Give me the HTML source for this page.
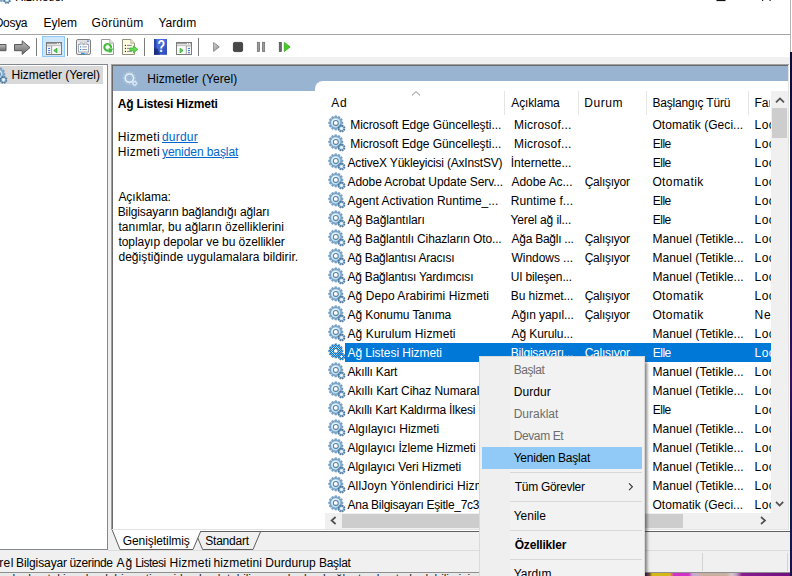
<!DOCTYPE html><html lang="tr"><head><meta charset="utf-8"><title>Hizmetler</title><style>
html,body{margin:0;padding:0}
body{width:792px;height:576px;overflow:hidden;background:#fff;position:relative;font:12px/15px "Liberation Sans",Arial,sans-serif;color:#000}
.t{position:absolute;white-space:pre;line-height:15px;height:15px;font-size:12px}
.b{position:absolute}
#shapes{position:absolute;left:0;top:0}
#menu{position:absolute;left:479px;top:356px;width:164px;height:240px;background:#f2f2f2;border:1px solid #dadada;box-shadow:3px 5px 3px -1px rgba(0,0,0,.5);box-sizing:content-box}
#menu .t{}
</style></head><body>
<div class="b" style="left:0px;top:57px;width:790px;height:515px;background:#f0f0f0;"></div>
<div class="b" style="left:0px;top:34px;width:790px;height:1px;background:#a5a5a5;"></div>
<div class="b" style="left:790px;top:0px;width:1px;height:52px;background:#b4b4b4;"></div>
<div class="b" style="left:790px;top:52px;width:2px;height:524px;background:linear-gradient(#0d0b36 0%,#10104a 30%,#2a0f58 55%,#3a0f5c 62%,#14124e 75%,#0d1a4a 88%,#1a1050 100%);"></div>
<div class="b" style="left:0px;top:573px;width:645px;height:3px;background:#e9e9e9;"></div>
<div class="b" style="left:645px;top:573px;width:145px;height:3px;background:linear-gradient(90deg,#5a2a6a 0%,#6a4a3a 3%,#d4b81a 5%,#d4b81a 17%,#d030c8 20%,#d030c8 30%,#c8a8d8 33%,#c8b0a0 40%,#c8b0a0 56%,#d8c8d0 60%,#c0a0c0 63%,#8a1a90 67%,#701080 100%);"></div>
<span class="t" style="left:2.00px;top:571.80px;letter-spacing:-0.137px;color:#222;">adımları takip ederek hizmeti yeniden başlatabilir ve ardından bağlantıyı kontrol edebilirsiniz.</span>
<div class="b" style="left:0px;top:572px;width:790px;height:1px;background:#8f8f8f;"></div>
<div class="b" style="left:0px;top:64px;width:107px;height:485px;background:#fff;border-top:1px solid #828790;border-right:1px solid #828790;border-bottom:1px solid #828790;height:484px"></div>
<div class="b" style="left:0px;top:66.3px;width:103px;height:17.4px;background:#d9d9d9;"></div>
<div class="b" style="left:111px;top:64px;width:679px;height:467px;background:#fff;"></div>
<div class="b" style="left:111px;top:64px;width:678px;height:1px;background:#a0a0a0;"></div>
<div class="b" style="left:111px;top:64px;width:1px;height:466px;background:#a0a0a0;"></div>
<div class="b" style="left:112px;top:65px;width:676px;height:1px;background:#696969;"></div>
<div class="b" style="left:112px;top:65px;width:1px;height:464px;background:#696969;"></div>
<div class="b" style="left:112px;top:529px;width:677px;height:1px;background:#e3e3e3;"></div>
<div class="b" style="left:788px;top:65px;width:1px;height:465px;background:#e3e3e3;"></div>
<div class="b" style="left:113px;top:66px;width:675px;height:24.6px;background:#99b4d1;"></div>
<div class="b" style="left:315px;top:81px;width:473px;height:10px;background:#fff;border-top-left-radius:8px"></div>
<div class="b" style="left:201px;top:531px;width:589px;height:1.3px;background:#5f5f5f;"></div>
<div class="b" style="left:504px;top:91px;width:1px;height:24px;background:#e5e5e5;"></div>
<div class="b" style="left:578px;top:91px;width:1px;height:24px;background:#e5e5e5;"></div>
<div class="b" style="left:646px;top:91px;width:1px;height:24px;background:#e5e5e5;"></div>
<div class="b" style="left:748px;top:91px;width:1px;height:24px;background:#e5e5e5;"></div>
<div class="b" style="left:345px;top:343px;width:426px;height:19px;background:#0078d7;"></div>
<div class="b" style="left:771.4px;top:91px;width:17.1px;height:438.3px;background:#f0f0f0;"></div>
<div class="b" style="left:325px;top:513px;width:447px;height:16.3px;background:#f0f0f0;"></div>
<div class="b" style="left:772.4px;top:108.3px;width:14.8px;height:29.4px;background:#cdcdcd;"></div>
<div class="b" style="left:342px;top:513.6px;width:340.8px;height:14.6px;background:#cdcdcd;"></div>
<div class="b" style="left:108px;top:550px;width:682px;height:1px;background:#dcdcdc;"></div>
<div class="b" style="left:702px;top:553px;width:1px;height:18px;background:#d2d2d2;"></div>
<div class="b" style="left:787px;top:553px;width:1px;height:18px;background:#d2d2d2;"></div>
<svg id="shapes" width="792" height="576" viewBox="0 0 792 576"><defs>
<linearGradient id="gArrow" x1="0" y1="0" x2="0" y2="1"><stop offset="0" stop-color="#bdbdbd"/><stop offset="1" stop-color="#6c6c6c"/></linearGradient>
<linearGradient id="gPlay" x1="0" y1="0" x2="1" y2="1"><stop offset="0" stop-color="#d8d8d8"/><stop offset="1" stop-color="#8c8c8c"/></linearGradient>
<linearGradient id="gHelp" x1="0" y1="0" x2="1" y2="1"><stop offset="0" stop-color="#5a7eea"/><stop offset="1" stop-color="#2a48bc"/></linearGradient>
<linearGradient id="gGear" x1="0" y1="0" x2="1" y2="1"><stop offset="0" stop-color="#e3f0fa"/><stop offset="0.55" stop-color="#a9c8e0"/><stop offset="1" stop-color="#6f9abb"/></linearGradient>
<radialGradient id="gRing" cx="0.35" cy="0.3" r="0.8"><stop offset="0" stop-color="#eefafe"/><stop offset="0.6" stop-color="#cbe6f6"/><stop offset="1" stop-color="#a4c9e6"/></radialGradient>
<pattern id="chk" width="2" height="2" patternUnits="userSpaceOnUse"><rect width="1" height="1" fill="#0078d7"/><rect x="1" y="1" width="1" height="1" fill="#0078d7"/></pattern>
<symbol id="gear" viewBox="0 0 16 16" overflow="visible">
<path d="M12.60,5.79 L14.00,6.03 L14.00,7.77 L12.60,8.01 L12.37,8.84 L13.47,9.74 L12.60,11.25 L11.27,10.76 L10.66,11.37 L11.15,12.70 L9.64,13.57 L8.74,12.47 L7.91,12.70 L7.67,14.10 L5.93,14.10 L5.69,12.70 L4.86,12.47 L3.96,13.57 L2.45,12.70 L2.94,11.37 L2.33,10.76 L1.00,11.25 L0.13,9.74 L1.23,8.84 L1.00,8.01 L-0.40,7.77 L-0.40,6.03 L1.00,5.79 L1.23,4.96 L0.13,4.06 L1.00,2.55 L2.33,3.04 L2.94,2.43 L2.45,1.10 L3.96,0.23 L4.86,1.33 L5.69,1.10 L5.93,-0.30 L7.67,-0.30 L7.91,1.10 L8.74,1.33 L9.64,0.23 L11.15,1.10 L10.66,2.43 L11.27,3.04 L12.60,2.55 L13.47,4.06 L12.37,4.96Z" fill="#7ba4c7" stroke="#6a96bb" stroke-width="0.5"/>
<circle cx="6.8" cy="6.9" r="4.75" fill="url(#gRing)"/>
<circle cx="6.8" cy="6.9" r="3.0" fill="#56819f"/>
<circle cx="6.8" cy="6.9" r="1.95" fill="#fff"/>
<path d="M14.98,12.83 L16.10,13.35 L15.66,14.42 L14.49,14.01 L14.02,14.48 L14.44,15.65 L13.37,16.10 L12.84,14.98 L12.17,14.98 L11.65,16.10 L10.58,15.66 L10.99,14.49 L10.52,14.02 L9.35,14.44 L8.90,13.37 L10.02,12.84 L10.02,12.17 L8.90,11.65 L9.34,10.58 L10.51,10.99 L10.98,10.52 L10.56,9.35 L11.63,8.90 L12.16,10.02 L12.83,10.02 L13.35,8.90 L14.42,9.34 L14.01,10.51 L14.48,10.98 L15.65,10.56 L16.10,11.63 L14.98,12.16Z" fill="#4f7b9f" stroke="#456f94" stroke-width="0.5"/>
<circle cx="12.5" cy="12.5" r="2.1" fill="#c4def0"/>
<circle cx="12.5" cy="12.5" r="0.95" fill="#fff"/>
</symbol>
<symbol id="gearSel" viewBox="0 0 16 16" overflow="visible">
<path d="M12.60,5.79 L14.00,6.03 L14.00,7.77 L12.60,8.01 L12.37,8.84 L13.47,9.74 L12.60,11.25 L11.27,10.76 L10.66,11.37 L11.15,12.70 L9.64,13.57 L8.74,12.47 L7.91,12.70 L7.67,14.10 L5.93,14.10 L5.69,12.70 L4.86,12.47 L3.96,13.57 L2.45,12.70 L2.94,11.37 L2.33,10.76 L1.00,11.25 L0.13,9.74 L1.23,8.84 L1.00,8.01 L-0.40,7.77 L-0.40,6.03 L1.00,5.79 L1.23,4.96 L0.13,4.06 L1.00,2.55 L2.33,3.04 L2.94,2.43 L2.45,1.10 L3.96,0.23 L4.86,1.33 L5.69,1.10 L5.93,-0.30 L7.67,-0.30 L7.91,1.10 L8.74,1.33 L9.64,0.23 L11.15,1.10 L10.66,2.43 L11.27,3.04 L12.60,2.55 L13.47,4.06 L12.37,4.96Z M8.70,6.90 A1.9,1.9 0 1,0 4.90,6.90 A1.9,1.9 0 1,0 8.70,6.90Z" fill="url(#chk)" fill-rule="evenodd"/>
<path d="M14.98,12.83 L16.10,13.35 L15.66,14.42 L14.49,14.01 L14.02,14.48 L14.44,15.65 L13.37,16.10 L12.84,14.98 L12.17,14.98 L11.65,16.10 L10.58,15.66 L10.99,14.49 L10.52,14.02 L9.35,14.44 L8.90,13.37 L10.02,12.84 L10.02,12.17 L8.90,11.65 L9.34,10.58 L10.51,10.99 L10.98,10.52 L10.56,9.35 L11.63,8.90 L12.16,10.02 L12.83,10.02 L13.35,8.90 L14.42,9.34 L14.01,10.51 L14.48,10.98 L15.65,10.56 L16.10,11.63 L14.98,12.16Z M13.40,12.50 A0.9,0.9 0 1,0 11.60,12.50 A0.9,0.9 0 1,0 13.40,12.50Z" fill="url(#chk)" fill-rule="evenodd"/>
</symbol>
<symbol id="gearL" viewBox="0 0 16 16" overflow="visible">
<path d="M12.60,5.79 L14.00,6.03 L14.00,7.77 L12.60,8.01 L12.37,8.84 L13.47,9.74 L12.60,11.25 L11.27,10.76 L10.66,11.37 L11.15,12.70 L9.64,13.57 L8.74,12.47 L7.91,12.70 L7.67,14.10 L5.93,14.10 L5.69,12.70 L4.86,12.47 L3.96,13.57 L2.45,12.70 L2.94,11.37 L2.33,10.76 L1.00,11.25 L0.13,9.74 L1.23,8.84 L1.00,8.01 L-0.40,7.77 L-0.40,6.03 L1.00,5.79 L1.23,4.96 L0.13,4.06 L1.00,2.55 L2.33,3.04 L2.94,2.43 L2.45,1.10 L3.96,0.23 L4.86,1.33 L5.69,1.10 L5.93,-0.30 L7.67,-0.30 L7.91,1.10 L8.74,1.33 L9.64,0.23 L11.15,1.10 L10.66,2.43 L11.27,3.04 L12.60,2.55 L13.47,4.06 L12.37,4.96Z M8.70,6.90 A1.9,1.9 0 1,0 4.90,6.90 A1.9,1.9 0 1,0 8.70,6.90Z" fill="#c9dcec" fill-opacity="0.45" fill-rule="evenodd"/>
<circle cx="6.8" cy="6.9" r="4.3" fill="none" stroke="#e2f1fb" stroke-width="1.7"/>
<circle cx="6.8" cy="6.9" r="3.1" fill="none" stroke="#86a6c6" stroke-width="0.6"/>
<path d="M14.98,12.83 L16.10,13.35 L15.66,14.42 L14.49,14.01 L14.02,14.48 L14.44,15.65 L13.37,16.10 L12.84,14.98 L12.17,14.98 L11.65,16.10 L10.58,15.66 L10.99,14.49 L10.52,14.02 L9.35,14.44 L8.90,13.37 L10.02,12.84 L10.02,12.17 L8.90,11.65 L9.34,10.58 L10.51,10.99 L10.98,10.52 L10.56,9.35 L11.63,8.90 L12.16,10.02 L12.83,10.02 L13.35,8.90 L14.42,9.34 L14.01,10.51 L14.48,10.98 L15.65,10.56 L16.10,11.63 L14.98,12.16Z M13.40,12.50 A0.9,0.9 0 1,0 11.60,12.50 A0.9,0.9 0 1,0 13.40,12.50Z" fill="#d4e5f3" fill-opacity="0.6" fill-rule="evenodd"/>
<circle cx="12.5" cy="12.5" r="1.9" fill="none" stroke="#e2f1fb" stroke-width="0.9"/>
</symbol>
</defs><rect x="716.5" y="0" width="9" height="1.1" fill="#111"/><rect x="762" y="0" width="1.2" height="1" fill="#222"/><rect x="769.5" y="0" width="1.2" height="1" fill="#222"/><use href="#gear" x="-5.5" y="-12.5" width="16" height="16"/><path d="M-3,44.5 H6 V50.7 H-3Z" fill="url(#gArrow)" stroke="#585858" stroke-width="1"/><path d="M14.5,44.5 H22.2 V40.8 L30,47.6 L22.2,54.4 V50.7 H14.5Z" fill="url(#gArrow)" stroke="#585858" stroke-width="1" stroke-linejoin="round"/><line x1="36.5" y1="38" x2="36.5" y2="56" stroke="#7d7d7d" stroke-width="1"/><line x1="67.5" y1="38" x2="67.5" y2="56" stroke="#7d7d7d" stroke-width="1"/><line x1="144.5" y1="38" x2="144.5" y2="56" stroke="#7d7d7d" stroke-width="1"/><line x1="198.5" y1="38" x2="198.5" y2="56" stroke="#7d7d7d" stroke-width="1"/><rect x="42.5" y="36.5" width="22" height="20" fill="#cde6f9" stroke="#8ecbfa" stroke-width="1"/><rect x="46.5" y="42.5" width="15" height="12" fill="#fbfbfb" stroke="#7c7c7c"/><line x1="47" y1="43.7" x2="61" y2="43.7" stroke="#8c8c8c" stroke-width="1.1"/><rect x="57" y="43.1" width="1.1" height="1.2" fill="#fff"/><rect x="59" y="43.1" width="1.1" height="1.2" fill="#fff"/><line x1="47" y1="45.9" x2="61" y2="45.9" stroke="#999" stroke-width="0.9"/><rect x="52.3" y="46.2" width="8.5" height="7.6" fill="#fafafa"/><rect x="58.2" y="46.4" width="2.4" height="7.2" fill="#ececec"/><path d="M57,48.2 V52.9 L53.7,50.5Z" fill="#58cf58" stroke="#2fa42f" stroke-width="0.7" stroke-linejoin="round"/><line x1="51.6" y1="46" x2="51.6" y2="54" stroke="#8a8a8a" stroke-width="0.8"/><rect x="48.1" y="47.9" width="2.1" height="1.05" fill="#3a78d0"/><rect x="48.1" y="50.05" width="2.1" height="1.05" fill="#3a78d0"/><rect x="48.1" y="52.199999999999996" width="2.1" height="1.05" fill="#3a78d0"/><rect x="176.5" y="42.5" width="15" height="12" fill="#fbfbfb" stroke="#7c7c7c"/><line x1="177" y1="43.7" x2="191" y2="43.7" stroke="#8c8c8c" stroke-width="1.1"/><rect x="187" y="43.1" width="1.1" height="1.2" fill="#fff"/><rect x="189" y="43.1" width="1.1" height="1.2" fill="#fff"/><line x1="177" y1="45.9" x2="191" y2="45.9" stroke="#999" stroke-width="0.9"/><rect x="177.2" y="46.2" width="8.6" height="7.6" fill="#fafafa"/><path d="M180.1,48.2 V52.9 L183.2,50.5Z" fill="#58cf58" stroke="#2fa42f" stroke-width="0.7" stroke-linejoin="round"/><line x1="186.3" y1="46" x2="186.3" y2="54" stroke="#8a8a8a" stroke-width="0.8"/><rect x="187.9" y="47.9" width="2.1" height="1.05" fill="#3a78d0"/><rect x="187.9" y="50.05" width="2.1" height="1.05" fill="#3a78d0"/><rect x="187.9" y="52.199999999999996" width="2.1" height="1.05" fill="#3a78d0"/><rect x="76.5" y="39.5" width="14" height="15" rx="1.6" fill="#f1f1f1" stroke="#7e7e7e"/><rect x="77.5" y="40.4" width="12" height="1.8" fill="#dcdcdc"/><rect x="87.2" y="40.5" width="1.5" height="1.4" fill="#3a78d0"/><rect x="78.5" y="44.5" width="10" height="7.5" fill="#fff" stroke="#97a1b2" stroke-width="0.9"/><path d="M80,44.5 V43 H83 V44.5 M84,44.5 V43 H87 V44.5" fill="#fff" stroke="#97a1b2" stroke-width="0.8"/><rect x="80" y="46.3" width="1.2" height="1.2" fill="#2d7fe0"/><rect x="80" y="48.9" width="1.2" height="1.2" fill="#2d7fe0"/><line x1="82.3" y1="46.9" x2="87" y2="46.9" stroke="#8b93a5" stroke-width="0.9"/><line x1="82.3" y1="49.5" x2="87" y2="49.5" stroke="#8b93a5" stroke-width="0.9"/><rect x="81" y="52.8" width="3.6" height="1.5" fill="#2d9be8"/><rect x="85.3" y="52.8" width="2.7" height="1.5" fill="#bdbdbd"/><path d="M101.5,39.5 H109.8 L113.5,43.2 V54.5 H101.5Z" fill="#fdfdfd" stroke="#9b9b9b"/><path d="M109.8,39.5 V43.2 H113.5" fill="#eee" stroke="#9b9b9b" stroke-width="0.8"/><path d="M110.9,47.9 A3.3,3.3 0 1,0 108.6,50.45" fill="none" stroke="#3fba3a" stroke-width="2.2"/><path d="M108.4,48.2 L113,48.6 L111.4,52.6 L108.6,52.4Z" fill="#3fba3a"/><path d="M105.6,45.6 A2.9,2.9 0 0,1 109,44.9" fill="none" stroke="#7fe070" stroke-width="0.8"/><path d="M122.5,39.5 H130.8 L134.5,43.2 V54.5 H122.5Z" fill="#fdfbe0" stroke="#93917f"/><path d="M130.8,39.5 V43.2 H134.5" fill="#f2efc4" stroke="#a5a38a" stroke-width="0.8"/><rect x="124.9" y="44.85" width="1.1" height="1.1" fill="#222"/><line x1="127" y1="45.4" x2="131.8" y2="45.4" stroke="#7f8796" stroke-width="1"/><rect x="124.9" y="47.85" width="1.1" height="1.1" fill="#222"/><line x1="127" y1="48.4" x2="131.8" y2="48.4" stroke="#7f8796" stroke-width="1"/><rect x="124.9" y="50.85" width="1.1" height="1.1" fill="#222"/><line x1="127" y1="51.4" x2="131.8" y2="51.4" stroke="#7f8796" stroke-width="1"/><path d="M129.8,48.1 H133.4 V46 L138,49.4 L133.4,52.8 V50.7 H129.8Z" fill="#66d955" stroke="#3cb43a" stroke-width="0.8" stroke-linejoin="round"/><rect x="154" y="39" width="13" height="15.8" fill="url(#gHelp)"/><rect x="154" y="39" width="2.4" height="15.8" fill="#1b349a" opacity="0.75"/><path d="M154,48.5 H157.5 L160,54.8 H154Z" fill="#14246e" opacity="0.7"/><text transform="translate(161.3,52.4) scale(0.78,1)" text-anchor="middle" font-family="Liberation Sans, Arial, sans-serif" font-weight="bold" font-size="16" fill="#fff">?</text><path d="M213.6,42.5 L219.3,46.9 L213.6,51.4Z" fill="url(#gPlay)" stroke="#858585" stroke-width="0.9" stroke-linejoin="round"/><rect x="233.4" y="42.4" width="9.2" height="9.2" rx="1.4" fill="#484848" stroke="#2f2f2f" stroke-width="0.8"/><rect x="257.3" y="42.3" width="2.3" height="9.3" fill="#9a9a9a" stroke="#6a6a6a" stroke-width="0.7"/><rect x="262.4" y="42.3" width="2.3" height="9.3" fill="#9a9a9a" stroke="#6a6a6a" stroke-width="0.7"/><rect x="279.2" y="42.3" width="2.2" height="9.3" fill="#6a6a6a" stroke="#444" stroke-width="0.6"/><path d="M284.3,42.4 L290.2,46.9 L284.3,51.5Z" fill="#48cc24" stroke="#34a81c" stroke-width="0.8" stroke-linejoin="round"/><use href="#gear" x="-9" y="67.3" width="16" height="16"/><use href="#gearL" x="123" y="71.6" width="15" height="15"/><use href="#gear" x="329" y="116" width="16" height="16"/><use href="#gear" x="329" y="135" width="16" height="16"/><use href="#gear" x="329" y="154" width="16" height="16"/><use href="#gear" x="329" y="173" width="16" height="16"/><use href="#gear" x="329" y="192" width="16" height="16"/><use href="#gear" x="329" y="211" width="16" height="16"/><use href="#gear" x="329" y="230" width="16" height="16"/><use href="#gear" x="329" y="249" width="16" height="16"/><use href="#gear" x="329" y="268" width="16" height="16"/><use href="#gear" x="329" y="287" width="16" height="16"/><use href="#gear" x="329" y="306" width="16" height="16"/><use href="#gear" x="329" y="325" width="16" height="16"/><use href="#gear" x="329" y="344" width="16" height="16"/><use href="#gear" x="329" y="363" width="16" height="16"/><use href="#gear" x="329" y="382" width="16" height="16"/><use href="#gear" x="329" y="401" width="16" height="16"/><use href="#gear" x="329" y="420" width="16" height="16"/><use href="#gear" x="329" y="439" width="16" height="16"/><use href="#gear" x="329" y="458" width="16" height="16"/><use href="#gear" x="329" y="477" width="16" height="16"/><use href="#gear" x="329" y="496" width="16" height="16"/><use href="#gearSel" x="329" y="344" width="16" height="16"/><path d="M412,95.4 L416,91.6 L420,95.4" fill="none" stroke="#7a7a7a" stroke-width="0.9"/><path d="M776,102.4 L780,98.4 L784,102.4" fill="none" stroke="#505050" stroke-width="1.7"/><path d="M776,501.8 L779.6,505.6 L783.2,501.8" fill="none" stroke="#505050" stroke-width="1.7"/><path d="M335.6,517 L331.6,520.5 L335.6,524" fill="none" stroke="#505050" stroke-width="1.7"/><path d="M761,517 L765,520.5 L761,524" fill="none" stroke="#505050" stroke-width="1.7"/><path d="M111,530.5 L113,530.5 L120,549.5 H193 L200.8,531 " fill="#fff" stroke="none"/><path d="M112.2,530 L120,549.5 H193 L200.8,531" fill="none" stroke="#5f5f5f" stroke-width="1"/><path d="M197.8,538 L202.6,549.5 H253 L260.6,531.5" fill="none" stroke="#5f5f5f" stroke-width="1"/></svg>
<span class="t" style="left:-5.30px;top:15.80px;letter-spacing:-0.300px;">Dosya</span>
<span class="t" style="left:43.60px;top:15.80px;">Eylem</span>
<span class="t" style="left:91.60px;top:15.80px;letter-spacing:0.267px;">Görünüm</span>
<span class="t" style="left:158.40px;top:15.80px;">Yardım</span>
<span class="t" style="left:15.00px;top:-10.20px;letter-spacing:-0.125px;">Hizmetler</span>
<span class="t" style="left:11.50px;top:67.80px;letter-spacing:-0.031px;">Hizmetler (Yerel)</span>
<span class="t" style="left:147.30px;top:71.80px;letter-spacing:0.069px;">Hizmetler (Yerel)</span>
<span class="t" style="left:117.80px;top:96.80px;letter-spacing:-0.194px;font-weight:bold;">Ağ Listesi Hizmeti</span>
<span class="t" style="left:117.70px;top:129.80px;letter-spacing:0.333px;">Hizmeti</span>
<span class="t" style="left:162.00px;top:129.80px;letter-spacing:0.200px;color:#0066cc;text-decoration:underline;">durdur</span>
<span class="t" style="left:117.70px;top:144.80px;letter-spacing:0.333px;">Hizmeti</span>
<span class="t" style="left:162.00px;top:144.80px;letter-spacing:-0.077px;color:#0066cc;text-decoration:underline;">yeniden başlat</span>
<span class="t" style="left:118.40px;top:189.80px;letter-spacing:-0.025px;">Açıklama:</span>
<span class="t" style="left:117.70px;top:204.80px;letter-spacing:-0.103px;">Bilgisayarın bağlandığı ağları</span>
<span class="t" style="left:118.40px;top:219.80px;letter-spacing:0.024px;">tanımlar, bu ağların özelliklerini</span>
<span class="t" style="left:118.40px;top:234.80px;letter-spacing:-0.053px;">toplayıp depolar ve bu özellikler</span>
<span class="t" style="left:118.40px;top:249.80px;letter-spacing:0.068px;">değiştiğinde uygulamalara bildirir.</span>
<span class="t" style="left:331.30px;top:95.80px;letter-spacing:0.600px;">Ad</span>
<span class="t" style="left:511.30px;top:95.80px;letter-spacing:-0.129px;">Açıklama</span>
<span class="t" style="left:584.30px;top:95.80px;letter-spacing:0.525px;">Durum</span>
<span class="t" style="left:652.40px;top:95.80px;letter-spacing:-0.185px;">Başlangıç Türü</span>
<span class="t" style="left:350.20px;top:117.80px;letter-spacing:-0.057px;">Microsoft Edge Güncelleşti...</span>
<span class="t" style="left:514.00px;top:117.80px;letter-spacing:0.200px;">Microsof...</span>
<span class="t" style="left:652.40px;top:117.80px;letter-spacing:0.050px;">Otomatik (Geci...</span>
<span class="t" style="left:754.50px;top:117.80px;letter-spacing:0.500px;width:16px;overflow:hidden;">Loc</span>
<span class="t" style="left:350.20px;top:136.80px;letter-spacing:-0.057px;">Microsoft Edge Güncelleşti...</span>
<span class="t" style="left:514.00px;top:136.80px;letter-spacing:0.200px;">Microsof...</span>
<span class="t" style="left:652.70px;top:136.80px;letter-spacing:-0.467px;">Elle</span>
<span class="t" style="left:754.50px;top:136.80px;letter-spacing:0.500px;width:16px;overflow:hidden;">Loc</span>
<span class="t" style="left:347.50px;top:155.80px;letter-spacing:-0.186px;">ActiveX Yükleyicisi (AxInstSV)</span>
<span class="t" style="left:510.70px;top:155.80px;">İnternette...</span>
<span class="t" style="left:652.70px;top:155.80px;letter-spacing:-0.467px;">Elle</span>
<span class="t" style="left:754.50px;top:155.80px;letter-spacing:0.500px;width:16px;overflow:hidden;">Loc</span>
<span class="t" style="left:347.50px;top:174.80px;letter-spacing:-0.089px;">Adobe Acrobat Update Serv...</span>
<span class="t" style="left:511.50px;top:174.80px;letter-spacing:-0.040px;">Adobe Ac...</span>
<span class="t" style="left:584.70px;top:174.80px;letter-spacing:-0.263px;">Çalışıyor</span>
<span class="t" style="left:652.40px;top:174.80px;letter-spacing:0.400px;">Otomatik</span>
<span class="t" style="left:754.50px;top:174.80px;letter-spacing:0.500px;width:16px;overflow:hidden;">Loc</span>
<span class="t" style="left:347.50px;top:193.80px;">Agent Activation Runtime_...</span>
<span class="t" style="left:510.70px;top:193.80px;letter-spacing:0.091px;">Runtime f...</span>
<span class="t" style="left:652.70px;top:193.80px;letter-spacing:-0.467px;">Elle</span>
<span class="t" style="left:754.50px;top:193.80px;letter-spacing:0.500px;width:16px;overflow:hidden;">Loc</span>
<span class="t" style="left:347.50px;top:212.80px;letter-spacing:-0.100px;">Ağ Bağlantıları</span>
<span class="t" style="left:510.50px;top:212.80px;letter-spacing:-0.115px;">Yerel ağ il...</span>
<span class="t" style="left:652.70px;top:212.80px;letter-spacing:-0.467px;">Elle</span>
<span class="t" style="left:754.50px;top:212.80px;letter-spacing:0.500px;width:16px;overflow:hidden;">Loc</span>
<span class="t" style="left:347.50px;top:231.80px;letter-spacing:-0.130px;">Ağ Bağlantılı Cihazların Oto...</span>
<span class="t" style="left:511.50px;top:231.80px;letter-spacing:-0.250px;">Ağa Bağlı ...</span>
<span class="t" style="left:584.70px;top:231.80px;letter-spacing:-0.263px;">Çalışıyor</span>
<span class="t" style="left:652.50px;top:231.80px;letter-spacing:0.024px;">Manuel (Tetikle...</span>
<span class="t" style="left:754.50px;top:231.80px;letter-spacing:0.500px;width:16px;overflow:hidden;">Loc</span>
<span class="t" style="left:347.50px;top:250.80px;letter-spacing:-0.220px;">Ağ Bağlantısı Aracısı</span>
<span class="t" style="left:511.50px;top:250.80px;letter-spacing:-0.050px;">Windows ...</span>
<span class="t" style="left:584.70px;top:250.80px;letter-spacing:-0.263px;">Çalışıyor</span>
<span class="t" style="left:652.50px;top:250.80px;letter-spacing:0.024px;">Manuel (Tetikle...</span>
<span class="t" style="left:754.50px;top:250.80px;letter-spacing:0.500px;width:16px;overflow:hidden;">Loc</span>
<span class="t" style="left:347.50px;top:269.80px;letter-spacing:-0.217px;">Ağ Bağlantısı Yardımcısı</span>
<span class="t" style="left:510.70px;top:269.80px;letter-spacing:-0.167px;">UI bileşen...</span>
<span class="t" style="left:652.50px;top:269.80px;letter-spacing:0.024px;">Manuel (Tetikle...</span>
<span class="t" style="left:754.50px;top:269.80px;letter-spacing:0.500px;width:16px;overflow:hidden;">Loc</span>
<span class="t" style="left:347.50px;top:288.80px;letter-spacing:0.062px;">Ağ Depo Arabirimi Hizmeti</span>
<span class="t" style="left:510.70px;top:288.80px;letter-spacing:-0.055px;">Bu hizmet...</span>
<span class="t" style="left:584.70px;top:288.80px;letter-spacing:-0.263px;">Çalışıyor</span>
<span class="t" style="left:652.40px;top:288.80px;letter-spacing:0.400px;">Otomatik</span>
<span class="t" style="left:754.50px;top:288.80px;letter-spacing:0.500px;width:16px;overflow:hidden;">Loc</span>
<span class="t" style="left:347.50px;top:307.80px;letter-spacing:-0.093px;">Ağ Konumu Tanıma</span>
<span class="t" style="left:511.50px;top:307.80px;letter-spacing:-0.083px;">Ağın yapıl...</span>
<span class="t" style="left:584.70px;top:307.80px;letter-spacing:-0.263px;">Çalışıyor</span>
<span class="t" style="left:652.40px;top:307.80px;letter-spacing:0.400px;">Otomatik</span>
<span class="t" style="left:754.50px;top:307.80px;letter-spacing:0.900px;width:16px;overflow:hidden;">Net</span>
<span class="t" style="left:347.50px;top:326.80px;letter-spacing:0.118px;">Ağ Kurulum Hizmeti</span>
<span class="t" style="left:511.50px;top:326.80px;letter-spacing:-0.091px;">Ağ Kurulu...</span>
<span class="t" style="left:652.50px;top:326.80px;letter-spacing:0.024px;">Manuel (Tetikle...</span>
<span class="t" style="left:754.50px;top:326.80px;letter-spacing:0.500px;width:16px;overflow:hidden;">Loc</span>
<span class="t" style="left:347.50px;top:345.80px;letter-spacing:-0.053px;color:#ffffff;">Ağ Listesi Hizmeti</span>
<span class="t" style="left:510.70px;top:345.80px;letter-spacing:-0.200px;color:#ffffff;">Bilgisayarı...</span>
<span class="t" style="left:584.70px;top:345.80px;letter-spacing:-0.263px;color:#ffffff;">Çalışıyor</span>
<span class="t" style="left:652.70px;top:345.80px;letter-spacing:-0.467px;color:#ffffff;">Elle</span>
<span class="t" style="left:754.50px;top:345.80px;letter-spacing:0.500px;color:#ffffff;width:16px;overflow:hidden;">Loc</span>
<span class="t" style="left:347.50px;top:364.80px;letter-spacing:-0.150px;">Akıllı Kart</span>
<span class="t" style="left:652.50px;top:364.80px;letter-spacing:0.024px;">Manuel (Tetikle...</span>
<span class="t" style="left:754.50px;top:364.80px;letter-spacing:0.500px;width:16px;overflow:hidden;">Loc</span>
<span class="t" style="left:347.50px;top:383.80px;letter-spacing:-0.093px;">Akıllı Kart Cihaz Numaral...</span>
<span class="t" style="left:652.50px;top:383.80px;letter-spacing:0.024px;">Manuel (Tetikle...</span>
<span class="t" style="left:754.50px;top:383.80px;letter-spacing:0.500px;width:16px;overflow:hidden;">Loc</span>
<span class="t" style="left:347.50px;top:402.80px;letter-spacing:-0.212px;">Akıllı Kart Kaldırma İlkesi</span>
<span class="t" style="left:652.70px;top:402.80px;letter-spacing:-0.467px;">Elle</span>
<span class="t" style="left:754.50px;top:402.80px;letter-spacing:0.500px;width:16px;overflow:hidden;">Loc</span>
<span class="t" style="left:347.50px;top:421.80px;letter-spacing:-0.024px;">Algılayıcı Hizmeti</span>
<span class="t" style="left:652.50px;top:421.80px;letter-spacing:0.024px;">Manuel (Tetikle...</span>
<span class="t" style="left:754.50px;top:421.80px;letter-spacing:0.500px;width:16px;overflow:hidden;">Loc</span>
<span class="t" style="left:347.50px;top:440.80px;letter-spacing:-0.104px;">Algılayıcı İzleme Hizmeti</span>
<span class="t" style="left:652.50px;top:440.80px;letter-spacing:0.024px;">Manuel (Tetikle...</span>
<span class="t" style="left:754.50px;top:440.80px;letter-spacing:0.500px;width:16px;overflow:hidden;">Loc</span>
<span class="t" style="left:347.50px;top:459.80px;letter-spacing:-0.109px;">Algılayıcı Veri Hizmeti</span>
<span class="t" style="left:652.50px;top:459.80px;letter-spacing:0.024px;">Manuel (Tetikle...</span>
<span class="t" style="left:754.50px;top:459.80px;letter-spacing:0.500px;width:16px;overflow:hidden;">Loc</span>
<span class="t" style="left:347.50px;top:478.80px;letter-spacing:0.111px;">AllJoyn Yönlendirici Hizmeti</span>
<span class="t" style="left:652.50px;top:478.80px;letter-spacing:0.024px;">Manuel (Tetikle...</span>
<span class="t" style="left:754.50px;top:478.80px;letter-spacing:0.500px;width:16px;overflow:hidden;">Loc</span>
<span class="t" style="left:347.50px;top:497.80px;letter-spacing:-0.269px;">Ana Bilgisayarı Eşitle_7c3a</span>
<span class="t" style="left:652.40px;top:497.80px;letter-spacing:0.050px;">Otomatik (Geci...</span>
<span class="t" style="left:754.50px;top:497.80px;letter-spacing:0.500px;width:16px;overflow:hidden;">Loc</span>
<span class="t" style="left:754.40px;top:95.80px;letter-spacing:0.150px;width:16px;overflow:hidden;">Far</span>
<span class="t" style="left:122.70px;top:533.80px;letter-spacing:-0.075px;">Genişletilmiş</span>
<span class="t" style="left:205.20px;top:533.80px;letter-spacing:-0.200px;">Standart</span>
<span class="t" style="left:-15.30px;top:555.80px;letter-spacing:0.425px;">Yerel</span>
<span class="t" style="left:16.00px;top:555.80px;letter-spacing:-0.100px;">Bilgisayar</span>
<span class="t" style="left:69.50px;top:555.80px;letter-spacing:-0.357px;">üzerinde</span>
<span class="t" style="left:116.50px;top:555.80px;letter-spacing:0.900px;">Ağ</span>
<span class="t" style="left:135.20px;top:555.80px;letter-spacing:-0.517px;">Listesi</span>
<span class="t" style="left:169.50px;top:555.80px;letter-spacing:0.250px;">Hizmeti</span>
<span class="t" style="left:213.50px;top:555.80px;letter-spacing:0.137px;">hizmetini</span>
<span class="t" style="left:265.20px;top:555.80px;letter-spacing:0.057px;">Durdurup</span>
<span class="t" style="left:319.00px;top:555.80px;letter-spacing:-0.280px;">Başlat</span>
<div id="menu"><div class="b" style="left:0;top:0;width:30px;height:240px;background:#efefef"></div><div class="b" style="left:2px;top:90px;width:160px;height:22px;background:#91c9f7"></div><div class="b" style="left:30px;top:115px;width:132px;height:1px;background:#d7d7d7"></div><div class="b" style="left:30px;top:144px;width:132px;height:1px;background:#d7d7d7"></div><div class="b" style="left:30px;top:173px;width:132px;height:1px;background:#d7d7d7"></div><div class="b" style="left:30px;top:202px;width:132px;height:1px;background:#d7d7d7"></div><svg class="b" style="left:0;top:0" width="165" height="220" viewBox="0 0 165 220"><path d="M149,126.4 L152.4,129.8 L149,133.2" fill="none" stroke="#333" stroke-width="1.1"/></svg><span class="t" style="left:33.70px;top:5.80px;letter-spacing:-0.420px;color:#6d6d6d;">Başlat</span><span class="t" style="left:33.70px;top:27.80px;letter-spacing:0.060px;color:#000;">Durdur</span><span class="t" style="left:33.70px;top:49.80px;letter-spacing:-0.014px;color:#6d6d6d;">Duraklat</span><span class="t" style="left:33.70px;top:71.80px;letter-spacing:-0.386px;color:#6d6d6d;">Devam Et</span><span class="t" style="left:33.70px;top:93.80px;letter-spacing:-0.238px;color:#000;">Yeniden Başlat</span><span class="t" style="left:34.70px;top:122.80px;letter-spacing:-0.282px;color:#000;">Tüm Görevler</span><span class="t" style="left:33.70px;top:151.80px;letter-spacing:-0.020px;color:#000;">Yenile</span><span class="t" style="left:34.70px;top:180.80px;letter-spacing:-0.189px;color:#000;font-weight:bold;">Özellikler</span><span class="t" style="left:33.70px;top:209.80px;letter-spacing:-0.020px;color:#000;">Yardım</span></div>
</body></html>
